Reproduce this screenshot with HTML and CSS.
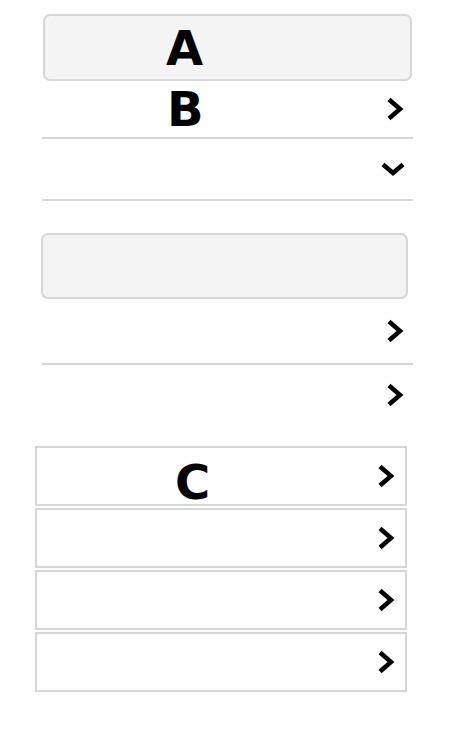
FILE: index.html
```html
<!DOCTYPE html>
<html lang="en">
<head>
  <meta charset="UTF-8">
  <meta name="viewport" content="width=device-width, initial-scale=1">
  <title>Menu</title>
  <link rel="stylesheet" href="styles.css">
</head>
<body>
  <main class="page">
    <!-- Primer grupo -->
    <section class="group">
      <div class="field field-a"><span class="label">A</span></div>
      <div class="row row-b">
        <span class="label">B</span>
        <svg class="chev" viewBox="0 0 18 24"><polyline points="3,2.5 14,12 3,21.5"/></svg>
      </div>
      <div class="row row-open">
        <svg class="chev-down" viewBox="0 0 24 14"><polyline points="2,2.5 12,11 22,2.5"/></svg>
      </div>
    </section>

    <!-- Segundo grupo -->
    <section class="group group-2">
      <div class="field field-empty"></div>
      <div class="row row-tall">
        <svg class="chev" viewBox="0 0 18 24"><polyline points="3,2.5 14,12 3,21.5"/></svg>
      </div>
      <div class="row row-last">
        <svg class="chev" viewBox="0 0 18 24"><polyline points="3,2.5 14,12 3,21.5"/></svg>
      </div>
    </section>

    <!-- Lista de tarjetas -->
    <ul class="cards">
      <li class="card">
        <span class="label">C</span>
        <svg class="chev" viewBox="0 0 18 24"><polyline points="3,2.5 14,12 3,21.5"/></svg>
      </li>
      <li class="card">
        <svg class="chev" viewBox="0 0 18 24"><polyline points="3,2.5 14,12 3,21.5"/></svg>
      </li>
      <li class="card">
        <svg class="chev" viewBox="0 0 18 24"><polyline points="3,2.5 14,12 3,21.5"/></svg>
      </li>
      <li class="card">
        <svg class="chev" viewBox="0 0 18 24"><polyline points="3,2.5 14,12 3,21.5"/></svg>
      </li>
    </ul>
  </main>
</body>
</html>
```

FILE: styles.css
```css
/* Estilos globales */
html, body {
  margin: 0;
  padding: 0;
  background-color: #fff;
  font-family: "DejaVu Sans", Verdana, sans-serif;
  color: #000;
}
.page {
  padding-top: 14px;
}
/* Grupos con separadores */
.group {
  width: 371px;
  margin-left: 42px;
}
.field {
  box-sizing: border-box;
  height: 67px;
  margin: 0 1px;
  background: #f4f4f4;
  border: 2px solid #d6d6d6;
  border-radius: 7px;
  display: flex;
  align-items: center;
}
.label {
  font-size: 48px;
  font-weight: bold;
  line-height: 1;
}
.field-a .label {
  padding-left: 121px;
}
.row {
  box-sizing: border-box;
  display: flex;
  align-items: center;
  border-bottom: 2px solid #d6d6d6;
  padding-right: 9px;
}
.row-b {
  height: 58px;
}
.row-b .label {
  padding-left: 125px;
}
.row-open {
  height: 62px;
  padding-right: 8px;
}
/* Segundo grupo */
.group-2 {
  margin-top: 32px;
}
.field-empty {
  height: 66px;
  margin: 0 5px 0 -1px;
}
.row-tall {
  height: 66px;
}
.row-last {
  height: 60px;
  border-bottom: none;
}
/* Iconos */
.chev {
  width: 18px;
  height: 24px;
  margin-left: auto;
  fill: none;
  stroke: #000;
  stroke-width: 4.5;
}
.chev-down {
  width: 24px;
  height: 14px;
  margin-left: auto;
  fill: none;
  stroke: #000;
  stroke-width: 4.5;
}
/* Tarjetas */
.cards {
  list-style: none;
  margin: 21px 0 0 35px;
  padding: 0;
  width: 372px;
  display: flex;
  flex-direction: column;
  gap: 2px;
}
.card {
  box-sizing: border-box;
  height: 60px;
  border: 2px solid #d6d6d6;
  display: flex;
  align-items: center;
  padding-right: 10px;
}
.card .label {
  padding: 12px 0 0 138px;
}
```
